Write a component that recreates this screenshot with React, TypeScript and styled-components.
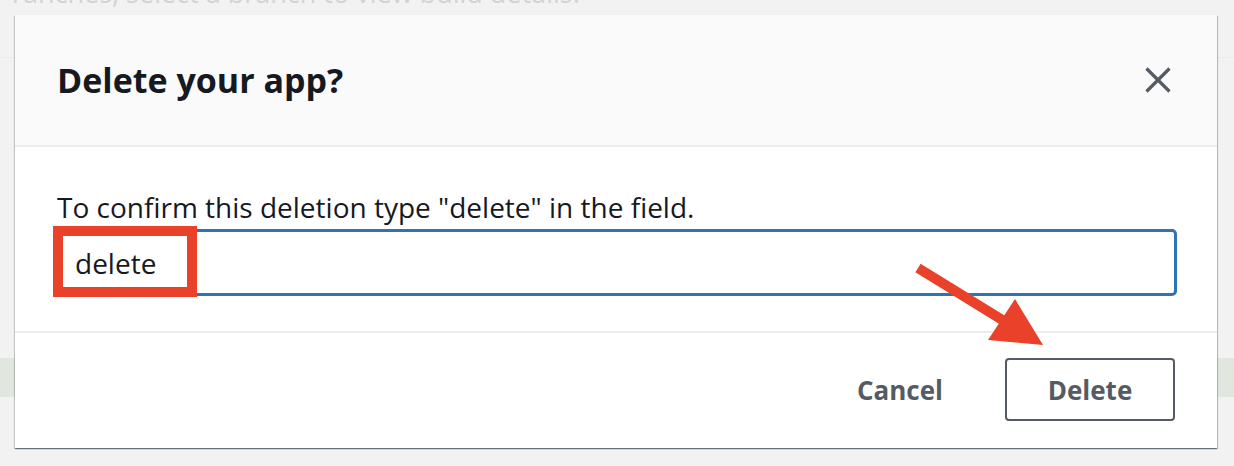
import React from "react";
import styled, { createGlobalStyle } from "styled-components";

const Global = createGlobalStyle`
  html, body { margin: 0; padding: 0; }
  body {
    background: #f2f2f2;
    font-family: "Open Sans", "Noto Sans", sans-serif;
    width: 1234px;
    height: 466px;
    overflow: hidden;
  }
`;

const Page = styled.div`
  position: relative;
  width: 1234px;
  height: 466px;
  overflow: hidden;
  background: #f2f2f2;
`;

const Backdrop = styled.div`
  display: flex;
  flex-direction: column;
`;

const BackdropText = styled.div`
  margin: -21px 0 0 12px;
  font-size: 27px;
  line-height: 28px;
  color: #d2d3d3;
  white-space: nowrap;
`;

const BackdropLine = styled.div`
  margin-top: 50px;
  height: 1px;
  background: #ebebeb;
`;

const BackdropBand = styled.div`
  margin-top: 300px;
  height: 39px;
  background: #e1e6df;
`;

const Overlay = styled.div`
  position: absolute;
  inset: 0;
  padding: 15px 17px 18px 15px;
  display: flex;
`;

const Modal = styled.div`
  position: relative;
  flex: 1;
  display: flex;
  flex-direction: column;
  background: #fff;
  box-shadow: 0 1px 1px 0 rgba(0, 28, 36, 0.4), 1px 1px 1px 0 rgba(0, 28, 36, 0.2),
    -1px 1px 1px 0 rgba(0, 28, 36, 0.15);
`;

const Header = styled.div`
  height: 130px;
  flex: none;
  display: flex;
  align-items: center;
  justify-content: space-between;
  padding: 0 46px 0 42px;
  background: #fafafa;
  border-bottom: 2px solid #eaeded;
`;

const Title = styled.h2`
  margin: 0;
  font-size: 34px;
  font-weight: 700;
  color: #16191f;
`;

const CloseButton = styled.button`
  border: 0;
  background: transparent;
  padding: 0;
  width: 26px;
  height: 26px;
  display: flex;
  cursor: pointer;
`;

const Body = styled.div`
  height: 186px;
  flex: none;
  padding: 42px 40px 0 42px;
  border-bottom: 2px solid #eaeded;
  box-sizing: border-box;
`;

const Label = styled.label`
  display: block;
  font-size: 28px;
  line-height: 36px;
  color: #16191f;
  margin-bottom: 4px;
`;

const FieldWrap = styled.div`
  position: relative;
`;

const Input = styled.input`
  display: block;
  width: 100%;
  box-sizing: border-box;
  height: 67px;
  border: 3px solid #2f73b5;
  border-radius: 5px;
  padding: 0 15px;
  font-family: inherit;
  font-size: 28px;
  color: #16191f;
  background: #fff;
  outline: none;
`;

const Highlight = styled.div`
  position: absolute;
  left: -4px;
  top: -3px;
  width: 144px;
  height: 71px;
  box-sizing: border-box;
  border: 10px solid #e9412a;
  pointer-events: none;
`;

const Footer = styled.div`
  flex: 1;
  display: flex;
  align-items: center;
  justify-content: flex-end;
  gap: 30px;
  padding: 0 42px 2px;
`;

const Button = styled.button<{ $outlined?: boolean }>`
  font-family: inherit;
  font-size: 26px;
  font-weight: 700;
  color: #545b64;
  background: #fff;
  height: 63px;
  padding: 0 30px;
  border-radius: 4px;
  border: 2px solid ${(p) => (p.$outlined ? "#545b64" : "transparent")};
  cursor: pointer;
  min-width: ${(p) => (p.$outlined ? "170px" : "auto")};
`;

const Arrow = styled.svg`
  position: absolute;
  left: 885px;
  top: 240px;
  overflow: visible;
  pointer-events: none;
`;

export default function App() {
  return (
    <Page>
      <Global />
      <Backdrop>
        <BackdropText>ranches, select a branch to view build details.</BackdropText>
        <BackdropLine />
        <BackdropBand />
      </Backdrop>
      <Overlay>
        <Modal role="dialog" aria-labelledby="dlg-title">
          <Header>
            <Title id="dlg-title">Delete your app?</Title>
            <CloseButton aria-label="Close">
              <svg width="26" height="26" viewBox="0 0 26 26">
                <path d="M1.5 1.5 L24.5 24.5 M24.5 1.5 L1.5 24.5" stroke="#545b64" strokeWidth="3.2" fill="none" />
              </svg>
            </CloseButton>
          </Header>
          <Body>
            <Label htmlFor="confirm">To confirm this deletion type "delete" in the field.</Label>
            <FieldWrap>
              <Input id="confirm" defaultValue="delete" />
              <Highlight />
            </FieldWrap>
          </Body>
          <Footer>
            <Button>Cancel</Button>
            <Button $outlined>Delete</Button>
          </Footer>
          <Arrow width="150" height="100" viewBox="0 0 150 100">
            <line x1="18" y1="13" x2="104" y2="66" stroke="#e9412a" strokeWidth="10" />
            <polygon points="115,44 143,90 88,85" fill="#e9412a" />
          </Arrow>
        </Modal>
      </Overlay>
    </Page>
  );
}
